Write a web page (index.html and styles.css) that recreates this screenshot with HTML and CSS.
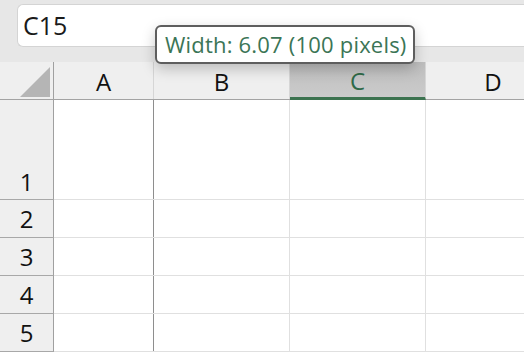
FILE: index.html
```html
<!DOCTYPE html>
<html lang="en">
<head>
    <meta charset="UTF-8">
    <meta name="viewport" content="width=device-width, initial-scale=1.0">
    <title>Column Width</title>
    <link rel="stylesheet" href="styles.css">
</head>
<body>
    <div class="formula-bar">
        <div class="name-box">C15</div>
    </div>

    <div class="sheet">
        <div class="col-heads">
            <div class="corner"><div class="select-all"></div></div>
            <div class="col-head col-a">A</div>
            <div class="col-head col-b">B</div>
            <div class="col-head col-c selected">C</div>
            <div class="col-head col-d">D</div>
        </div>

        <div class="row tall">
            <div class="row-head">1</div>
            <div class="cell col-a"></div>
            <div class="cell col-b"></div>
            <div class="cell col-c"></div>
            <div class="cell col-d"></div>
        </div>
        <div class="row">
            <div class="row-head">2</div>
            <div class="cell col-a"></div>
            <div class="cell col-b"></div>
            <div class="cell col-c"></div>
            <div class="cell col-d"></div>
        </div>
        <div class="row">
            <div class="row-head">3</div>
            <div class="cell col-a"></div>
            <div class="cell col-b"></div>
            <div class="cell col-c"></div>
            <div class="cell col-d"></div>
        </div>
        <div class="row">
            <div class="row-head">4</div>
            <div class="cell col-a"></div>
            <div class="cell col-b"></div>
            <div class="cell col-c"></div>
            <div class="cell col-d"></div>
        </div>
        <div class="row">
            <div class="row-head">5</div>
            <div class="cell col-a"></div>
            <div class="cell col-b"></div>
            <div class="cell col-c"></div>
            <div class="cell col-d"></div>
        </div>

        <!-- resize tooltip -->
        <div class="width-tip">Width: 6.07 (100 pixels)</div>
    </div>
</body>
</html>
```

FILE: styles.css
```css
body {
    margin: 0;
    width: 524px;
    height: 354px;
    overflow: hidden;
    font-family: "Open Sans", "Noto Sans", sans-serif;
    color: #1a1a1a;
    background: #fff;
}

.formula-bar {
    height: 62px;
    background: #e7e7e7;
    padding: 4px 0 0 17px;
    box-sizing: border-box;
}

.name-box {
    height: 43px;
    background: #fff;
    border: 1px solid #d4d4d4;
    border-right: none;
    border-radius: 6px 0 0 6px;
    box-sizing: border-box;
    padding-left: 5px;
    font-size: 25px;
    line-height: 41px;
}

.sheet {
    position: relative;
}

.col-heads, .row {
    display: flex;
}

.col-heads {
    height: 38px;
    background: #efefef;
    border-bottom: 1px solid #a3a3a3;
    box-sizing: border-box;
}

.corner, .row-head {
    width: 54px;
    flex-shrink: 0;
    border-right: 1px solid #a0a0a0;
    box-sizing: border-box;
}

.corner {
    display: flex;
    align-items: flex-end;
    justify-content: flex-end;
    padding: 0 3px 2px 0;
}

.select-all {
    width: 30px;
    height: 30px;
    background: #b5b5b5;
    clip-path: polygon(100% 0, 100% 100%, 0 100%);
}

.col-a { width: 100px; }
.col-b { width: 136px; }
.col-c { width: 136px; }

.col-a, .col-b, .col-c {
    flex-shrink: 0;
    box-sizing: border-box;
}

.col-d {
    flex: 1;
    min-width: 0;
}

.col-head {
    border-right: 1px solid #d6d6d6;
    text-align: center;
    font-size: 24px;
    line-height: 40px;
    color: #111;
}

/* column D runs past the window edge, so its label sits right of centre */
.col-head.col-d {
    border-right: none;
    padding-left: 36px;
}

.col-head.selected {
    background: linear-gradient(#bebebe, #cbcbcb);
    border-bottom: 3px solid #3c7350;
    margin-bottom: -1px;
    color: #2f6a48;
    line-height: 38px;
}

.row {
    height: 38px;
    border-bottom: 1px solid #e0e0e0;
    box-sizing: border-box;
}

.row.tall {
    height: 100px;
}

.row-head {
    background: #efefef;
    border-bottom: 1px solid #a8a8a8;
    margin-bottom: -1px;
    display: flex;
    align-items: center;
    justify-content: center;
    font-size: 24px;
    color: #111;
}

.row.tall .row-head {
    align-items: flex-end;
    padding-bottom: 1px;
}

.cell {
    border-right: 1px solid #e0e0e0;
}

.cell.col-a {
    border-right-color: #8e8e8e;
}

.cell.col-d {
    border-right: none;
}

.width-tip {
    position: absolute;
    left: 155px;
    top: -37px;
    height: 39px;
    padding: 0 6px 0 8px;
    box-sizing: border-box;
    background: #fff;
    border: 2px solid #5e5e5e;
    border-radius: 6px;
    box-shadow: 0 5px 14px rgba(0, 0, 0, 0.22);
    font-size: 22px;
    letter-spacing: 0.2px;
    line-height: 34px;
    color: #3b7556;
    white-space: nowrap;
}
```
